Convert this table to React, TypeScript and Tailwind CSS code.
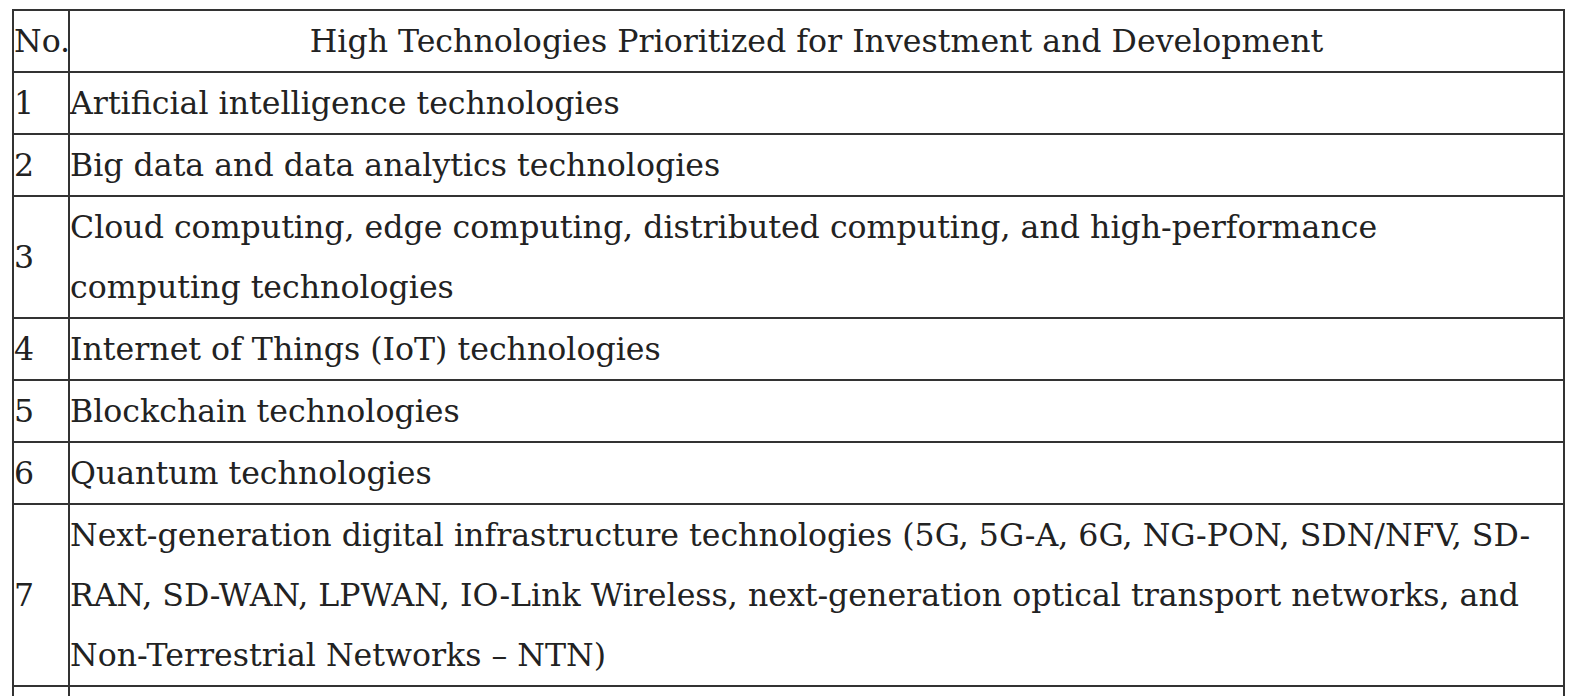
import { Fragment } from "react";

// each entry is a list of lines, so wrapping follows the source table
const rows = [
  { no: "1", lines: ["Artificial intelligence technologies"] },
  { no: "2", lines: ["Big data and data analytics technologies"] },
  {
    no: "3",
    lines: [
      "Cloud computing, edge computing, distributed computing, and high-performance",
      "computing technologies",
    ],
  },
  { no: "4", lines: ["Internet of Things (IoT) technologies"] },
  { no: "5", lines: ["Blockchain technologies"] },
  { no: "6", lines: ["Quantum technologies"] },
  {
    no: "7",
    lines: [
      "Next-generation digital infrastructure technologies (5G, 5G-A, 6G, NG-PON, SDN/NFV, SD-",
      "RAN, SD-WAN, LPWAN, IO-Link Wireless, next-generation optical transport networks, and",
      "Non-Terrestrial Networks – NTN)",
    ],
  },
];

export default function App() {
  return (
    <div className="bg-white min-h-screen pt-[9px] pl-3 pr-[13px] font-['DejaVu_Serif',serif] text-[31.6px] leading-[60px] text-[#222]">
      <table className="w-full table-fixed border-collapse">
        <colgroup>
          <col className="w-[56px]" />
          <col />
        </colgroup>
        <thead>
          <tr>
            <th className="border-2 border-[#333] p-0 text-left font-normal whitespace-nowrap">No.</th>
            <th className="border-2 border-[#333] p-0 text-center font-normal">
              High Technologies Prioritized for Investment and Development
            </th>
          </tr>
        </thead>
        <tbody>
          {rows.map((r) => (
            <tr key={r.no}>
              <td className="border-2 border-[#333] p-0 align-middle">{r.no}</td>
              <td className="border-2 border-[#333] p-0 whitespace-nowrap">
                {r.lines.map((line, i) => (
                  <Fragment key={i}>
                    {i > 0 && <br />}
                    {line}
                  </Fragment>
                ))}
              </td>
            </tr>
          ))}
          <tr>
            <td className="border-2 border-[#333] p-0">&nbsp;</td>
            <td className="border-2 border-[#333] p-0">&nbsp;</td>
          </tr>
        </tbody>
      </table>
    </div>
  );
}
